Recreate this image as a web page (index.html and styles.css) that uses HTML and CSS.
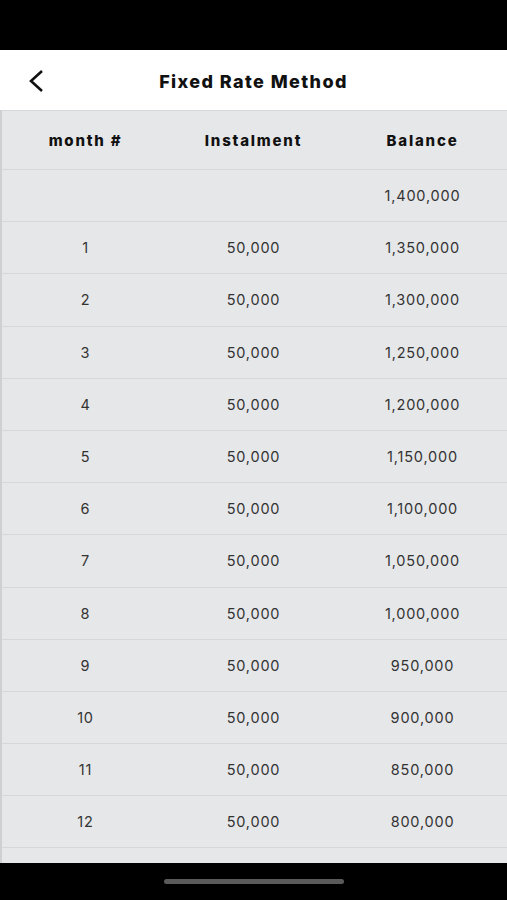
FILE: index.html
```html
<!DOCTYPE html>
<html>
<head>
<meta charset="utf-8">
<link rel="stylesheet" href="styles.css">
</head>
<body>
<div class="screen">
  <div class="statusbar"></div>
  <header class="appbar">
    <button class="back" aria-label="Back">
      <svg width="20" height="26" viewBox="0 0 20 26"><path d="M15 3 L4 13 L15 23" fill="none" stroke="#111" stroke-width="2.6" stroke-linecap="butt" stroke-linejoin="miter"/></svg>
    </button>
    <h1 class="title">Fixed Rate Method</h1>
  </header>
  <main class="table">
    <div class="row head"><span>month #</span><span>Instalment</span><span>Balance</span></div>
    <div class="row"><span></span><span></span><span>1,400,000</span></div>
    <div class="row"><span>1</span><span>50,000</span><span>1,350,000</span></div>
    <div class="row"><span>2</span><span>50,000</span><span>1,300,000</span></div>
    <div class="row"><span>3</span><span>50,000</span><span>1,250,000</span></div>
    <div class="row"><span>4</span><span>50,000</span><span>1,200,000</span></div>
    <div class="row"><span>5</span><span>50,000</span><span>1,150,000</span></div>
    <div class="row"><span>6</span><span>50,000</span><span>1,100,000</span></div>
    <div class="row"><span>7</span><span>50,000</span><span>1,050,000</span></div>
    <div class="row"><span>8</span><span>50,000</span><span>1,000,000</span></div>
    <div class="row"><span>9</span><span>50,000</span><span>950,000</span></div>
    <div class="row"><span>10</span><span>50,000</span><span>900,000</span></div>
    <div class="row"><span>11</span><span>50,000</span><span>850,000</span></div>
    <div class="row"><span>12</span><span>50,000</span><span>800,000</span></div>
    <div class="row"></div>
  </main>
  <div class="navbar"><div class="indicator"></div></div>
</div>
</body>
</html>
```
FILE: styles.css
```css
* { box-sizing: border-box; }
html, body { margin: 0; padding: 0; }
body { background: #000; font-family: "Inter", "Noto Sans", sans-serif; }
.screen { width: 507px; height: 900px; display: flex; flex-direction: column; overflow: hidden; background: #000; }
.statusbar { height: 50px; flex: none; background: #000; }
.appbar { height: 60px; flex: none; background: #fff; position: relative; display: flex; align-items: center; justify-content: center; padding-top: 3px; }
.back { position: absolute; left: 27px; top: 18px; width: 20px; height: 26px; padding: 0; border: 0; background: none; display: block; }
.back svg { display: block; }
.title { margin: 0; font-size: 18px; font-weight: 800; color: #111; letter-spacing: 1.4px; }
.table { flex: 1; overflow: hidden; background: #e6e7e9; border-top: 1px solid #d5d6d8; border-left: 2px solid #cfd0d2; }
.row { display: grid; grid-template-columns: 167px 169px 169px; height: 52.2px; border-bottom: 1.5px solid #d6d7d9; align-items: center; font-size: 14.5px; letter-spacing: 0.8px; color: #333; }
.row span { text-align: center; }
.row.head { height: 59px; font-weight: 800; color: #111; font-size: 15px; letter-spacing: 1.8px; }
.navbar { height: 37px; flex: none; background: #000; display: flex; justify-content: center; align-items: center; }
.indicator { width: 180px; height: 5px; border-radius: 3px; background: #5a5a5a; margin-left: 1px; }
```
